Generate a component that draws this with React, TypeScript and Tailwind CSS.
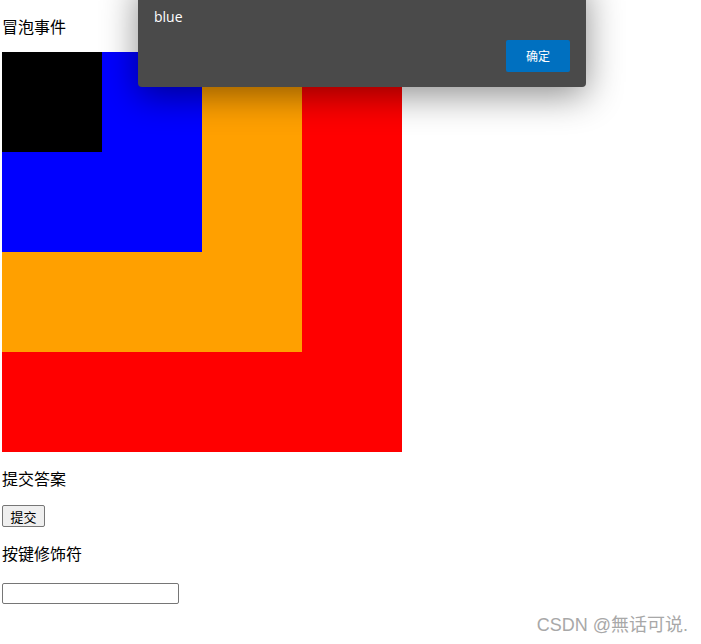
export default function App() {
  const cjk = { fontFamily: '"Microsoft YaHei", "Noto Sans CJK SC", sans-serif' }

  return (
    <div className="relative w-[701px] h-[644px] overflow-hidden bg-white text-black" style={cjk}>
      <div className="pl-[2px]">
        <p className="my-4 text-base leading-5">冒泡事件</p>

        <div className="w-[400px] h-[400px] bg-[#ff0000]">
          <div className="w-[300px] h-[300px] bg-[#ffa000]">
            <div className="w-[200px] h-[200px] bg-[#0000ff]">
              <div className="w-[100px] h-[100px] bg-black"></div>
            </div>
          </div>
        </div>

        <p className="my-4 text-base leading-[21px]">提交答案</p>
        <button className="block w-[43px] h-[22px] text-[13px] leading-none border border-[#767676] rounded-[2px] bg-[#efefef]">
          提交
        </button>

        <p className="my-4 text-base leading-[21px]">按键修饰符</p>
        <div className="pt-[3px]">
          <input className="block w-[177px] h-[21px] border border-[#767676] rounded-[2px] bg-white" />
        </div>
      </div>

      {/* alert dialog */}
      <div className="absolute left-[138px] top-[-20px] w-[448px] flex flex-col px-4 pt-[27px] pb-[15px] bg-[#4a4a4a] rounded-[4px] shadow-[0_8px_36px_rgba(0,0,0,0.45)]">
        <div
          className="text-sm leading-5 text-white"
          style={{ fontFamily: '"Segoe UI", "Open Sans", sans-serif' }}
        >
          blue
        </div>
        <button className="self-end mt-[13px] w-16 h-8 bg-[#0070c0] rounded-[2px] text-white text-xs">
          确定
        </button>
      </div>

      <div
        className="absolute right-[13px] bottom-[5px] text-[18px] text-[#a8a8a8]"
        style={{ fontFamily: 'Arial, "Liberation Sans", "Noto Sans CJK SC", sans-serif' }}
      >
        CSDN @無话可说.
      </div>
    </div>
  )
}
